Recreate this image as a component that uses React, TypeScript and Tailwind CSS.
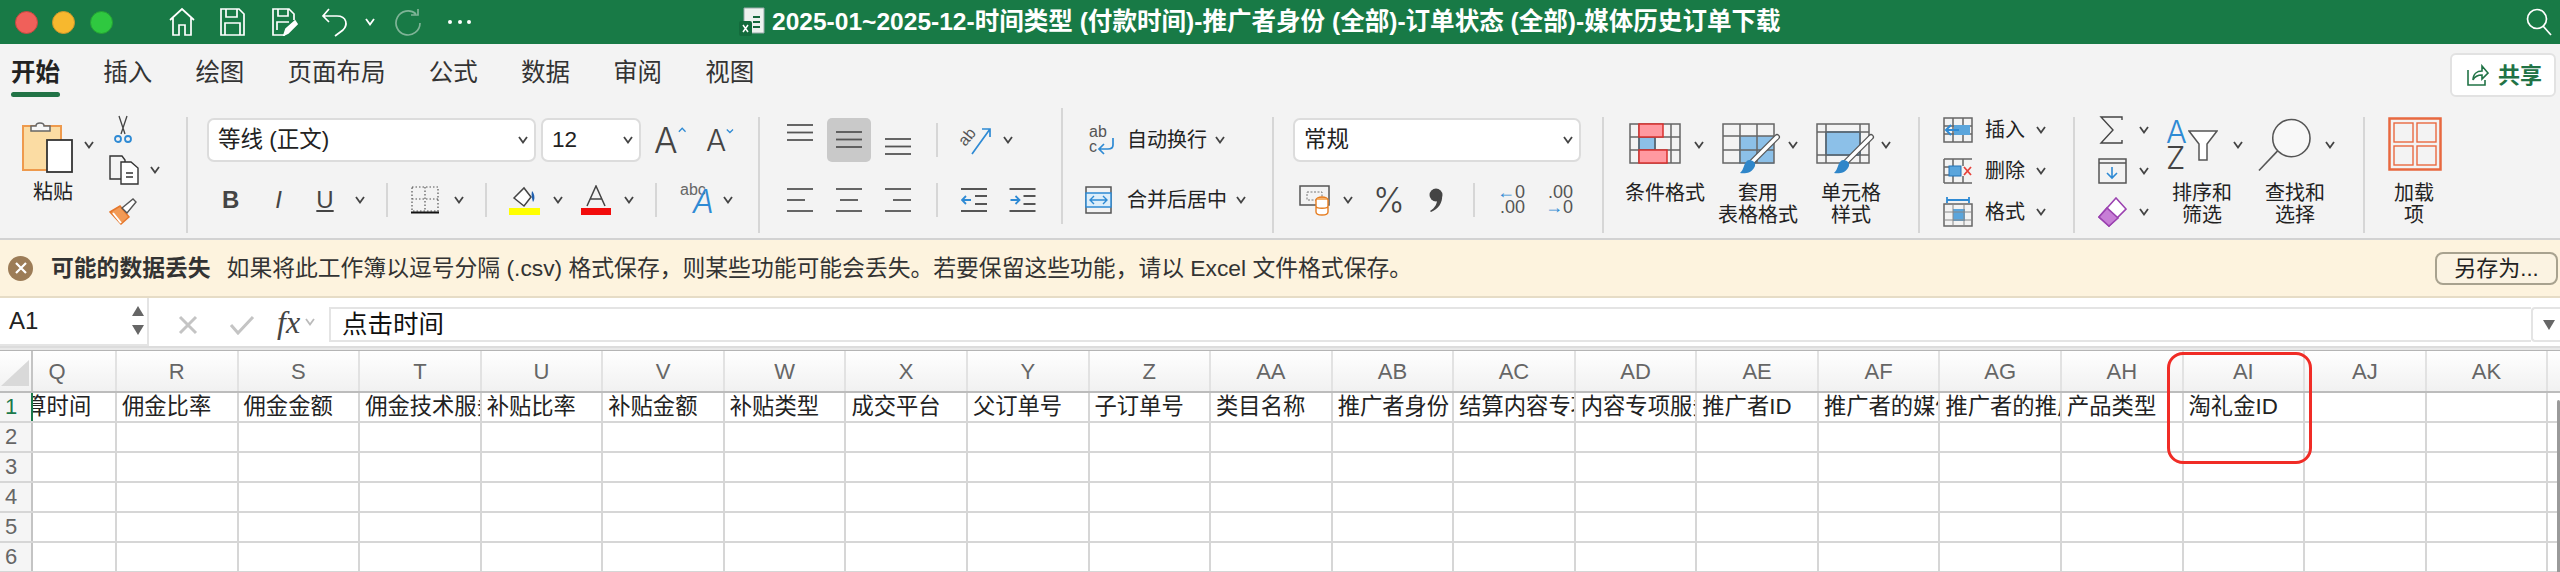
import React from 'react';

const ui = "font-['Liberation_Sans','Noto_Sans_CJK_SC',sans-serif]";
const thin = "font-['Inter',sans-serif] font-light";

const Chev = ({ className = '', color = '#444' }: { className?: string; color?: string }) => (
  <svg viewBox="0 0 10 8" className={`w-[10px] h-[8px] shrink-0 ${className}`} fill="none" stroke={color} strokeWidth="1.8">
    <path d="M1 1l4 5.5L9 1" />
  </svg>
);

const VSep = ({ className = '' }: { className?: string }) => (
  <div className={`w-[2px] shrink-0 bg-[#d6d6d6] ${className}`} />
);

const GroupSep = ({ className = '' }: { className?: string }) => <VSep className={`h-[116px] ${className}`} />;

// three line align icon, ys are line positions, widths as [x1,x2]
const Lines = ({ ys, xs, h = 24 }: { ys: number[]; xs: number[][]; h?: number }) => (
  <svg viewBox={`0 0 26 ${h}`} className="w-[26px] shrink-0" style={{ height: h }} stroke="#555" strokeWidth="1.8">
    {ys.map((y, i) => <line key={i} x1={xs[i][0]} x2={xs[i][1]} y1={y} y2={y} />)}
  </svg>
);

const full = [[0, 26], [0, 26], [0, 26]];

const Dropdown = ({ text, className }: { text: string; className: string }) => (
  <div className={`h-[44px] shrink-0 bg-white border-2 border-[#dcdcdc] rounded-[7px] flex items-center justify-between pl-[9px] pr-[6px] text-[22.5px] text-[#222] ${className}`}>
    <span className="whitespace-nowrap">{text}</span>
    <Chev />
  </div>
);

const Label = ({ lines }: { lines: string[] }) => (
  <div className="text-[20px] leading-[22px] text-[#222] text-center whitespace-nowrap">
    {lines.map(l => <div key={l}>{l}</div>)}
  </div>
);

const TallCol = ({ w, ml, children, lines }: { w: string; ml: string; children: React.ReactNode; lines: string[] }) => (
  <div className={`${w} ${ml} shrink-0 flex flex-col`}>
    <div className="h-[65px] flex items-start">{children}</div>
    <Label lines={lines} />
  </div>
);

const CellRow = ({ icon, text }: { icon: React.ReactNode; text: string }) => (
  <div className="h-[30px] flex items-center">
    <div className="w-[30px] ml-[23px] shrink-0">{icon}</div>
    <span className="w-[40px] ml-[12px] text-[20px] text-[#222] whitespace-nowrap">{text}</span>
    <Chev className="ml-[11px]" />
  </div>
);

const GridLines = ({ w, h, cols, rows, color = '#666' }: { w: number; h: number; cols: number[]; rows: number[]; color?: string }) => (
  <g stroke={color} strokeWidth="1.5" fill="none">
    <rect x="1" y="1" width={w - 2} height={h - 2} />
    {cols.map(c => <line key={c} x1={c} x2={c} y1="1" y2={h - 1} />)}
    {rows.map(r => <line key={r} y1={r} y2={r} x1="1" x2={w - 1} />)}
  </g>
);

const Brush = () => (
  <g>
    <path d="M55 14 L29 40" stroke="#555" strokeWidth="6" strokeLinecap="round" />
    <path d="M55 14 L29 40" stroke="#fff" strokeWidth="3.5" strokeLinecap="round" />
    <path d="M27 37c5 0 8 4 5 8-3 5-9 6-14 5 2-2 3-4 4-7 1-3 3-6 5-6z" fill="#2f86c9" />
  </g>
);

const headers = ['Q', 'R', 'S', 'T', 'U', 'V', 'W', 'X', 'Y', 'Z', 'AA', 'AB', 'AC', 'AD', 'AE', 'AF', 'AG', 'AH', 'AI', 'AJ', 'AK', ''];
const row1 = ['结算时间', '佣金比率', '佣金金额', '佣金技术服务费', '补贴比率', '补贴金额', '补贴类型', '成交平台', '父订单号', '子订单号', '类目名称', '推广者身份', '结算内容专项服务费', '内容专项服务费', '推广者ID', '推广者的媒体名称', '推广者的推广位', '产品类型', '淘礼金ID', '', '', ''];

const colW = (i: number) => (i === 0 ? 'w-[84px]' : 'w-[121.57px]');

const tabs = ['开始', '插入', '绘图', '页面布局', '公式', '数据', '审阅', '视图'];

export default function App() {
  return (
    <div className={`relative w-[2560px] h-[572px] overflow-hidden bg-white ${ui}`}>
      {/* title bar */}
      <div className="h-[44px] bg-[#187a46] flex items-center">
        <div className="w-[23px] h-[23px] ml-[15px] rounded-full bg-[#f0605a] border border-[#c8473f]" />
        <div className="w-[23px] h-[23px] ml-[14px] rounded-full bg-[#f7b82e] border border-[#d0962a]" />
        <div className="w-[23px] h-[23px] ml-[15px] rounded-full bg-[#2fc840] border border-[#25a233]" />
        <svg viewBox="0 0 28 30" className="w-[28px] h-[30px] ml-[55px]" fill="none" stroke="#fff" strokeWidth="1.7">
          <path d="M2 13 14 2l12 11M5 11v17h6V18h6v10h6V11" />
        </svg>
        <svg viewBox="0 0 28 28" className="w-[28px] h-[28px] ml-[22px]" fill="none" stroke="#fff" strokeWidth="1.7">
          <path d="M3 1h18l5 5v21H3zM8 1v8h11V1M7 27V15h15v12" />
        </svg>
        <svg viewBox="0 0 28 28" className="w-[28px] h-[28px] ml-[24px]" fill="none" stroke="#fff" strokeWidth="1.7">
          <path d="M15 27H3V1h16l5 5v6M8 1v7h10V1M7 22v-8h12" />
          <path d="M14 27l2-6 9-8 2 3-9 9z" fill="#fff" />
        </svg>
        <svg viewBox="0 0 30 30" className="w-[30px] h-[30px] ml-[23px]" fill="none" stroke="#fff" strokeWidth="1.7">
          <path d="M2 9h14c10 0 11 9 6 14l-8 6M8 2 2 9l6 6" />
        </svg>
        <Chev className="ml-[14px]" color="#fff" />
        <svg viewBox="0 0 28 28" className="w-[28px] h-[28px] ml-[19px]" fill="none" stroke="#7fb497" strokeWidth="1.7">
          <path d="M22 6A12 12 0 1 0 26 15M24 1v6h-7" />
        </svg>
        <div className="ml-[26px] w-[23px] flex justify-between">
          <div className="w-[4px] h-[4px] rounded-full bg-white" />
          <div className="w-[4px] h-[4px] rounded-full bg-white" />
          <div className="w-[4px] h-[4px] rounded-full bg-white" />
        </div>
        <svg viewBox="0 0 28 30" className="w-[28px] h-[30px] ml-[268px]">
          <path d="M5 1h20v25H5z" fill="#eef2ef" stroke="#9aa" />
          <path d="M14 10h7M14 15h7M14 20h7" stroke="#16683c" strokeWidth="2" />
          <rect x="0" y="14" width="13" height="15" rx="2" fill="#136b3c" />
          <path d="M4 18l5 7M9 18l-5 7" stroke="#fff" strokeWidth="1.5" />
        </svg>
        <span className="ml-[5px] text-[24.55px] font-bold text-white whitespace-nowrap">2025-01~2025-12-时间类型 (付款时间)-推广者身份 (全部)-订单状态 (全部)-媒体历史订单下载</span>
        <svg viewBox="0 0 26 28" className="w-[26px] h-[28px] ml-auto mr-[8px]" fill="none" stroke="#fff" strokeWidth="1.7">
          <circle cx="11" cy="11" r="9.5" />
          <path d="M17 18l8 9" />
        </svg>
      </div>

      {/* tabs */}
      <div className="h-[73px] bg-[#f3f3f3] flex items-start">
        <div className="flex pl-[11px] pt-[14px] gap-[43.2px]">
          {tabs.map((t, i) => (
            <div key={t} className="flex flex-col">
              <span className={`text-[24.5px] leading-[30px] whitespace-nowrap ${i === 0 ? 'font-bold text-[#222]' : 'text-[#333]'}`}>{t}</span>
              {i === 0 && <div className="h-[5px] mt-[4px] rounded-full bg-[#217346]" />}
            </div>
          ))}
        </div>
        <div className="ml-auto mr-[4px] mt-[9px] w-[106px] h-[44px] bg-white border-2 border-[#e2e2e2] rounded-[6px] flex items-center pl-[15px]">
          <svg viewBox="0 0 22 22" className="w-[22px] h-[22px]" fill="none" stroke="#217346" strokeWidth="1.6">
            <path d="M1 6v15h17v-5M6 16c0-6 4-9 9-9V2l6 7-6 6v-4c-4 0-7 1-9 5z" />
          </svg>
          <span className="ml-[9px] text-[22px] font-bold text-[#217346]">共享</span>
        </div>
      </div>

      {/* ribbon */}
      <div className="h-[123px] bg-[#f3f3f3] border-b-2 border-[#d2d2d2] flex items-start">
        {/* clipboard */}
        <div className="w-[186px] shrink-0 flex items-start">
          <div className="w-[62px] ml-[22px] mt-[1px] shrink-0 flex flex-col">
            <svg viewBox="0 0 51 55" className="w-[51px] h-[55px]">
              <rect x="1" y="8" width="38" height="44" fill="#fbdca3" stroke="#ee9a4d" strokeWidth="2" />
              <path d="M9 13V8h5c0-4 8-4 8 0h6v5z" fill="#f6f6f6" stroke="#666" strokeWidth="1.5" />
              <rect x="25" y="22" width="25" height="32" fill="#fff" stroke="#333" strokeWidth="1.8" />
            </svg>
            <div className="mt-[8px] text-center"><Label lines={['粘贴']} /></div>
          </div>
          <Chev className="mt-[24px]" />
          <div className="ml-[15px] -mt-[2px] flex flex-col">
            <svg viewBox="0 0 20 28" className="w-[20px] h-[28px] ml-[4px]" fill="none">
              <path d="M6 1l6 18M14 1 8 19" stroke="#444" strokeWidth="1.3" />
              <circle cx="5" cy="24" r="3" stroke="#2e8ad4" strokeWidth="1.8" />
              <circle cx="15" cy="24" r="3" stroke="#2e8ad4" strokeWidth="1.8" />
            </svg>
            <div className="flex items-center mt-[12px]">
              <svg viewBox="0 0 30 30" className="w-[30px] h-[30px]" fill="#fff" stroke="#333" strokeWidth="1.4">
                <path d="M1 1h12l3 4v19H1z" fill="none" />
                <path d="M12 7h10l7 6v16H12z" />
                <path d="M17 18h7M17 22h7" />
              </svg>
              <Chev className="ml-[11px]" />
            </div>
            <svg viewBox="0 0 28 28" className="w-[28px] h-[28px] mt-[12px]">
              <path d="M1 15l10-6 9 11-8 7z" fill="#f29a55" stroke="#e5762a" strokeWidth="1.5" />
              <path d="M4 16l8 10" stroke="#fff" strokeWidth="2" />
              <path d="M13 11 24 2l3 3-9 11z" fill="#fff" stroke="#555" strokeWidth="1.4" />
            </svg>
          </div>
        </div>
        <GroupSep />

        {/* font */}
        <div className="w-[570px] shrink-0 pl-[19px] pt-[1px]">
          <div className="flex items-center h-[44px]">
            <Dropdown text="等线 (正文)" className="w-[329px]" />
            <Dropdown text="12" className="w-[100px] ml-[5px]" />
            <div className="ml-[13px] w-[32px] flex items-start">
              <span className={`text-[35px] leading-[36px] text-[#444] ${thin}`}>A</span>
              <svg viewBox="0 0 10 6" className="w-[9px] h-[6px] mt-[5px]" fill="none" stroke="#2e8ad4" strokeWidth="1.6"><path d="M1 5l4-4 4 4" /></svg>
            </div>
            <div className="ml-[20px] w-[28px] flex items-start">
              <span className={`text-[30px] leading-[34px] text-[#444] ${thin}`}>A</span>
              <svg viewBox="0 0 10 6" className="w-[9px] h-[6px] mt-[5px]" fill="none" stroke="#2e8ad4" strokeWidth="1.6"><path d="M1 1l4 4 4-4" /></svg>
            </div>
          </div>
          <div className="flex items-center h-[34px] mt-[21px]">
            <span className="ml-[15px] w-[16px] text-center text-[24px] font-bold text-[#444]">B</span>
            <span className="ml-[33px] w-[15px] text-center text-[24px] italic text-[#444]">I</span>
            <span className="ml-[30px] w-[18px] text-center text-[24px] underline text-[#444]">U</span>
            <Chev className="ml-[21px]" />
            <VSep className="h-[34px] ml-[21px]" />
            <svg viewBox="0 0 28 28" className="w-[28px] h-[28px] ml-[23px]" fill="none">
              <path d="M1 1h26v24H1zM14 1v24M1 13h26" stroke="#555" strokeWidth="1.2" strokeDasharray="1.5 2" />
              <path d="M0 26.5h28" stroke="#111" strokeWidth="2" />
            </svg>
            <Chev className="ml-[15px]" />
            <VSep className="h-[34px] ml-[21px]" />
            <svg viewBox="0 0 31 30" className="w-[31px] h-[30px] ml-[22px]">
              <path d="M5 13 15 3l7 9-7 9z" fill="#fff" stroke="#444" strokeWidth="1.5" />
              <path d="M23 6c3 3 3 9 1 11-1-3-2-7-1-11z" fill="#1f5fae" />
              <rect x="0" y="23" width="31" height="7" fill="#ffff00" />
            </svg>
            <Chev className="ml-[13px]" />
            <svg viewBox="0 0 30 30" className="w-[30px] h-[30px] ml-[18px]" fill="none">
              <path d="M6 21 15 1l9 20M9 14h12" stroke="#444" strokeWidth="1.5" />
              <rect x="0" y="23" width="30" height="7" fill="#f20c0c" />
            </svg>
            <Chev className="ml-[13px]" />
            <VSep className="h-[34px] ml-[21px]" />
            <div className="ml-[23px] w-[34px] h-[34px] relative">
              <span className="absolute left-0 -top-[2px] text-[16px] leading-[18px] text-[#666]">abc</span>
              <span className={`absolute right-0 top-[2px] text-[32px] leading-[34px] italic text-[#2e8ad4] ${thin}`}>A</span>
            </div>
            <Chev className="ml-[9px]" />
          </div>
        </div>
        <GroupSep />

        {/* alignment */}
        <div className="w-[301px] shrink-0 pl-[18px] pt-[1px]">
          <div className="flex items-center h-[44px]">
            <div className="w-[44px] h-[44px] flex items-center justify-center"><div className="-mt-[14px]"><Lines ys={[1, 8.5, 16]} xs={full} h={18} /></div></div>
            <div className="w-[44px] h-[44px] ml-[5px] bg-[#c9c9c9] rounded-[5px] flex items-center justify-center"><Lines ys={[1, 8.5, 16]} xs={full} h={18} /></div>
            <div className="w-[44px] h-[44px] ml-[5px] flex items-center justify-center"><div className="mt-[14px]"><Lines ys={[1, 8.5, 16]} xs={full} h={18} /></div></div>
            <VSep className="h-[34px] ml-[16px]" />
            <svg viewBox="0 0 31 30" className="w-[31px] h-[30px] ml-[22px] overflow-visible" fill="none">
              <path d="M12 29 30 4M22 4h8v8" stroke="#2e8ad4" strokeWidth="1.7" />
              <text x="0" y="17" fontSize="16" fill="#555" transform="rotate(-50 8 14)">ab</text>
            </svg>
            <Chev className="ml-[12px]" />
          </div>
          <div className="flex items-center h-[34px] mt-[21px]">
            <div className="w-[44px] flex justify-center"><Lines ys={[2, 13, 24]} xs={[[0, 26], [0, 18], [0, 26]]} h={26} /></div>
            <div className="w-[44px] ml-[5px] flex justify-center"><Lines ys={[2, 13, 24]} xs={[[0, 26], [4, 22], [0, 26]]} h={26} /></div>
            <div className="w-[44px] ml-[5px] flex justify-center"><Lines ys={[2, 13, 24]} xs={[[0, 26], [8, 26], [0, 26]]} h={26} /></div>
            <VSep className="h-[34px] ml-[16px]" />
            <svg viewBox="0 0 26 26" className="w-[26px] h-[26px] ml-[23px]" fill="none">
              <path d="M0 2h26M14 9h12M14 17h12M0 24h26" stroke="#555" strokeWidth="1.8" />
              <path d="M10 13H1M5 9l-4 4 4 4" stroke="#2e8ad4" strokeWidth="1.8" />
            </svg>
            <svg viewBox="0 0 26 26" className="w-[27px] h-[26px] ml-[22px]" fill="none">
              <path d="M0 2h26M14 9h12M14 17h12M0 24h26" stroke="#555" strokeWidth="1.8" />
              <path d="M1 13h9M6 9l4 4-4 4" stroke="#2e8ad4" strokeWidth="1.8" />
            </svg>
          </div>
        </div>
        <GroupSep className="-mt-[9px]" />

        {/* wrap / merge */}
        <div className="w-[209px] shrink-0 pt-[1px]">
          <div className="flex items-center h-[44px]">
            <svg viewBox="0 0 26 30" className="w-[26px] h-[30px] ml-[26px] overflow-visible" fill="none">
              <text x="0" y="12" fontSize="16" fill="#555">ab</text>
              <text x="0" y="27" fontSize="16" fill="#555">c</text>
              <path d="M24 13v7c0 3-2 4-5 4h-8M15 19l-5 5 5 5" stroke="#2e8ad4" strokeWidth="1.7" />
            </svg>
            <span className="ml-[12px] text-[20px] text-[#222] whitespace-nowrap">自动换行</span>
            <Chev className="ml-[8px]" />
          </div>
          <div className="flex items-center h-[34px] mt-[21px]">
            <svg viewBox="0 0 27 28" className="w-[27px] h-[28px] ml-[22px]" fill="none">
              <rect x="1" y="1" width="25" height="26" stroke="#555" strokeWidth="1.5" />
              <rect x="1" y="7" width="25" height="14" fill="#dceefa" stroke="#2e8ad4" strokeWidth="1.5" />
              <path d="M5 14h17M9 10l-4 4 4 4M18 10l4 4-4 4" stroke="#2e8ad4" strokeWidth="1.4" />
            </svg>
            <span className="ml-[15px] text-[20px] text-[#222] whitespace-nowrap">合并后居中</span>
            <Chev className="ml-[9px]" />
          </div>
        </div>
        <GroupSep />

        {/* number */}
        <div className="w-[328px] shrink-0 pl-[19px] pt-[1px]">
          <Dropdown text="常规" className="w-[288px]" />
          <div className="flex items-center h-[34px] mt-[21px]">
            <svg viewBox="0 0 33 32" className="w-[33px] h-[32px] ml-[6px]" fill="none">
              <rect x="1" y="2" width="29" height="19" stroke="#555" strokeWidth="1.5" />
              <path d="M8 8h15v8H8z" stroke="#777" strokeDasharray="2 1.5" />
              <ellipse cx="23" cy="16" rx="6" ry="3" fill="#f6b26b" stroke="#e67e22" strokeWidth="1.4" />
              <path d="M17 16v12c0 4 12 4 12 0V16M17 22c0 3 12 3 12 0" fill="#fff" stroke="#e67e22" strokeWidth="1.4" />
            </svg>
            <Chev className="ml-[11px]" />
            <span className={`ml-[20px] w-[27px] text-[34px] leading-[34px] text-[#444] ${thin}`}>%</span>
            <svg viewBox="0 0 15 24" className="w-[15px] h-[24px] ml-[28px]" fill="#444">
              <circle cx="8" cy="7" r="6.5" />
              <path d="M14 7c1 8-4 14-11 17l-1-1c5-3 8-8 7-14z" />
            </svg>
            <VSep className="h-[34px] ml-[30px]" />
            <div className="ml-[21px] w-[29px] h-[30px] text-[18px] leading-[15px] text-[#555] text-right whitespace-nowrap">
              <div><span className="text-[#2e8ad4]">←</span>0</div>
              <div>.00</div>
            </div>
            <div className="ml-[20px] w-[28px] h-[30px] text-[18px] leading-[15px] text-[#555] text-right whitespace-nowrap">
              <div>.00</div>
              <div><span className="text-[#2e8ad4]">→</span>0</div>
            </div>
          </div>
        </div>
        <GroupSep />

        {/* styles */}
        <div className="w-[314px] shrink-0 flex items-start">
          <TallCol w="w-[84px]" ml="ml-[19px]" lines={['条件格式']}>
            <svg viewBox="0 0 52 41" className="w-[52px] h-[41px] ml-[6px] mt-[6px]">
              <rect x="10" y="14" width="16" height="13" fill="#8cc0e8" stroke="#2273b5" strokeWidth="1.5" />
              <GridLines w={52} h={41} cols={[10, 26, 42]} rows={[14, 27]} />
              <rect x="10" y="1" width="24" height="13" fill="#ff99a0" stroke="#d9302e" strokeWidth="1.5" />
              <rect x="10" y="27" width="28" height="13" fill="#ff99a0" stroke="#d9302e" strokeWidth="1.5" />
            </svg>
            <Chev className="ml-[13px] mt-[24px]" />
          </TallCol>
          <TallCol w="w-[80px]" ml="ml-[11px]" lines={['套用', '表格格式']}>
            <svg viewBox="0 0 53 52" className="w-[53px] h-[52px] ml-[4px] mt-[6px] overflow-visible">
              <rect x="17" y="13" width="35" height="28" fill="#8cc0e8" />
              <GridLines w={53} h={41} cols={[18, 35]} rows={[13, 27]} />
              <Brush />
            </svg>
            <Chev className="ml-[13px] mt-[24px]" />
          </TallCol>
          <TallCol w="w-[80px]" ml="ml-[13px]" lines={['单元格', '样式']}>
            <svg viewBox="0 0 54 52" className="w-[54px] h-[52px] ml-[5px] mt-[6px] overflow-visible">
              <rect x="10" y="9" width="34" height="23" fill="#8cc0e8" stroke="#2273b5" strokeWidth="1.5" />
              <GridLines w={54} h={41} cols={[10, 44]} rows={[9, 32]} />
              <Brush />
            </svg>
            <Chev className="ml-[11px] mt-[24px]" />
          </TallCol>
        </div>
        <GroupSep />

        {/* cells */}
        <div className="w-[153px] shrink-0 -mt-[2px] flex flex-col gap-[11px]">
          <CellRow text="插入" icon={
            <svg viewBox="0 0 30 26" className="w-[30px] h-[26px]">
              <GridLines w={30} h={26} cols={[10, 20]} rows={[9, 17]} />
              <rect x="11" y="8" width="16" height="10" fill="#5aa5dc" />
              <path d="M16 13H3M8 8l-5 5 5 5" fill="none" stroke="#2e8ad4" strokeWidth="2" />
            </svg>
          } />
          <CellRow text="删除" icon={
            <svg viewBox="0 0 30 26" className="w-[30px] h-[26px]">
              <path d="M1 1h28M1 25h28M1 9h10M1 17h10M10 1v7M20 1v7M10 18v7M20 18v7M1 1v24" fill="none" stroke="#666" strokeWidth="1.5" />
              <rect x="6" y="8" width="12" height="10" fill="#5aa5dc" stroke="#2273b5" />
              <path d="M21 9l7 8M28 9l-7 8" stroke="#e8413a" strokeWidth="1.8" />
            </svg>
          } />
          <CellRow text="格式" icon={
            <svg viewBox="0 0 30 30" className="w-[30px] h-[30px]">
              <path d="M4 3h22M4 0v6M26 0v6" fill="none" stroke="#2e8ad4" strokeWidth="1.8" />
              <rect x="10" y="12" width="12" height="12" fill="#5aa5dc" />
              <rect x="1" y="7" width="28" height="22" fill="none" stroke="#666" strokeWidth="1.5" />
              <path d="M10 7v22M21 7v22M1 15h28M1 23h28" stroke="#888" strokeWidth="1" />
            </svg>
          } />
        </div>
        <GroupSep />

        {/* editing */}
        <div className="w-[288px] shrink-0 flex items-start">
          <div className="ml-[23px] -mt-[2px] flex flex-col gap-[11px]">
            <div className="h-[30px] flex items-center">
              <svg viewBox="0 0 29 28" className="w-[29px] h-[28px]" fill="none" stroke="#444" strokeWidth="1.4">
                <path d="M24 4V1H3l12 13L3 27h21v-3" />
              </svg>
              <Chev className="ml-[12px]" />
            </div>
            <div className="h-[30px] flex items-center">
              <svg viewBox="0 0 29 26" className="w-[29px] h-[26px]" fill="none">
                <rect x="1" y="1" width="27" height="24" stroke="#555" strokeWidth="1.5" />
                <path d="M1 5h27" stroke="#555" strokeWidth="1.5" />
                <path d="M14 9v11M9 15l5 5 5-5" stroke="#2e8ad4" strokeWidth="1.6" />
              </svg>
              <Chev className="ml-[12px]" />
            </div>
            <div className="h-[30px] flex items-center">
              <svg viewBox="0 0 29 30" className="w-[29px] h-[30px]">
                <path d="M1 20 18 1l10 11-17 17z" fill="#fff" stroke="#9b42b0" strokeWidth="1.6" />
                <path d="M1 20 9 11l11 10-9 8z" fill="#c77ed6" stroke="#9b42b0" strokeWidth="1.6" />
              </svg>
              <Chev className="ml-[12px]" />
            </div>
          </div>
          <TallCol w="w-[80px]" ml="ml-[13px]" lines={['排序和', '筛选']}>
            <div className="ml-[4px] mt-[2px] w-[52px] h-[49px] flex">
              <div className="flex flex-col w-[22px]">
                <span className={`text-[31px] leading-[26px] text-[#2e8ad4] ${thin}`}>A</span>
                <span className={`text-[31px] leading-[26px] text-[#444] ${thin}`}>Z</span>
              </div>
              <svg viewBox="0 0 30 32" className="w-[30px] h-[32px] mt-[11px]" fill="#fff" stroke="#555" strokeWidth="1.5">
                <path d="M1 1h28L19 14v16h-8V14z" />
              </svg>
            </div>
            <Chev className="ml-[15px] mt-[24px]" />
          </TallCol>
          <TallCol w="w-[80px]" ml="ml-[13px]" lines={['查找和', '选择']}>
            <svg viewBox="0 0 54 54" className="w-[54px] h-[54px] ml-[3px] mt-[1px]" fill="#f8f8f8" stroke="#555" strokeWidth="1.6">
              <circle cx="34" cy="20" r="19" />
              <path d="M20 33 1 53" />
            </svg>
            <Chev className="ml-[14px] mt-[24px]" />
          </TallCol>
        </div>
        <GroupSep />

        {/* add-ins */}
        <TallCol w="w-[60px]" ml="ml-[19px]" lines={['加载', '项']}>
          <svg viewBox="0 0 54 54" className="w-[54px] h-[54px] ml-[4px]" fill="none" stroke="#e8683f">
            <rect x="1.5" y="1.5" width="51" height="51" strokeWidth="2.5" />
            <rect x="6" y="6" width="19" height="19" strokeWidth="1.4" />
            <rect x="29" y="6" width="19" height="19" strokeWidth="1.4" />
            <rect x="6" y="29" width="19" height="19" strokeWidth="1.4" />
            <rect x="29" y="29" width="19" height="19" strokeWidth="1.4" />
          </svg>
        </TallCol>
      </div>

      {/* warning banner */}
      <div className="h-[58px] bg-[#fdf3de] border-b-2 border-[#e6dcc6] flex items-center">
        <div className="w-[25px] h-[25px] ml-[8px] rounded-full bg-[#9c7c57] flex items-center justify-center">
          <svg viewBox="0 0 12 12" className="w-[12px] h-[12px]" stroke="#fff" strokeWidth="2.2"><path d="M1 1l10 10M11 1 1 11" /></svg>
        </div>
        <span className="ml-[18px] text-[22.8px] font-bold text-[#333] whitespace-nowrap">可能的数据丢失</span>
        <span className="ml-[16px] text-[22.8px] text-[#333] whitespace-nowrap">如果将此工作簿以逗号分隔 (.csv) 格式保存，则某些功能可能会丢失。若要保留这些功能，请以 Excel 文件格式保存。</span>
        <div className="ml-auto mr-[2px] w-[123px] h-[33px] border-2 border-[#a8a28f] rounded-[8px] bg-[#fbf3e2] flex items-center justify-center text-[22px] text-[#222]">另存为...</div>
      </div>

      {/* formula bar */}
      <div className="h-[50px] bg-white flex border-b-2 border-[#dcdcdc]">
        <div className="w-[149px] h-[48px] bg-white border-b-2 border-r-2 border-[#e4e4e4] flex items-center pl-[9px] relative">
          <span className="text-[24px] text-[#222]">A1</span>
          <div className="absolute right-[3px] top-[8px] flex flex-col gap-[9px] items-center">
            <div className="w-0 h-0 border-x-[6px] border-x-transparent border-b-[10px] border-b-[#666]" />
            <div className="w-0 h-0 border-x-[6px] border-x-transparent border-t-[10px] border-t-[#666]" />
          </div>
        </div>
        <div className="w-[180px] flex items-center">
          <svg viewBox="0 0 20 20" className="w-[20px] h-[20px] ml-[29px] mt-[6px]" stroke="#c4c4c4" strokeWidth="3"><path d="M2 2l16 16M18 2 2 18" /></svg>
          <svg viewBox="0 0 26 20" className="w-[26px] h-[20px] ml-[31px] mt-[6px]" fill="none" stroke="#c4c4c4" strokeWidth="3"><path d="M2 10l7 8L24 2" /></svg>
          <span className="ml-[22px] text-[32px] italic text-[#444] font-['Liberation_Serif',serif] whitespace-nowrap">fx</span>
          <Chev className="ml-[5px]" color="#bbb" />
        </div>
        <div className="flex-1 h-[35px] mt-[9px] border-y-2 border-l-2 border-[#e4e4e4] flex items-center pl-[11px] text-[25.5px] text-[#111]">点击时间</div>
        <div className="w-[29px] h-[35px] mt-[9px] border-2 border-r-0 border-[#e4e4e4] rounded-l-[4px] flex items-center pl-[10px]">
          <div className="w-0 h-0 border-x-[6px] border-x-transparent border-t-[10px] border-t-[#666]" />
        </div>
      </div>

      {/* sheet */}
      <div className="h-[3px] bg-[#e8e8e8] border-b border-[#b5b5b5]" />
      <div className="h-[42px] flex border-b-2 border-[#bcbcbc] bg-gradient-to-b from-white to-[#f1f1f1]">
        <div className="w-[33px] shrink-0 border-r-2 border-[#c4c4c4] pt-[9px] pl-[1px]">
          <div className="w-0 h-0 border-l-[28px] border-l-transparent border-b-[26px] border-b-[#d9d9d9]" />
        </div>
        {headers.map((h, i) => (
          <div key={i} className={`${colW(i)} shrink-0 border-r-2 border-[#e2e2e2] flex items-center justify-center text-[22px] text-[#666] ${i === 0 ? 'pr-[34px]' : ''}`}>{h}</div>
        ))}
      </div>
      {[1, 2, 3, 4, 5, 6].map(n => (
        <div key={n} className="h-[30px] flex border-b-2 border-[#d6d6d6]">
          <div className={`w-[33px] shrink-0 flex items-center pl-[5px] text-[22px] leading-none bg-[#f5f5f5] border-r-2 ${n === 1 ? 'border-[#1b7a4b] text-[#1b7a4b]' : 'border-[#c4c4c4] text-[#666]'}`}>{n}</div>
          {headers.map((_, i) => (
            <div key={i} className={`${colW(i)} shrink-0 overflow-hidden border-r-2 border-[#d6d6d6] flex items-center text-[22.3px] leading-none text-[#222] whitespace-nowrap ${i === 0 ? '' : 'pl-[5px]'}`}>
              {n === 1 && <span className={i === 0 ? '-ml-[31px]' : ''}>{row1[i]}</span>}
            </div>
          ))}
        </div>
      ))}

      {/* hand drawn red box and scrollbar sit over the sheet */}
      <div className="absolute left-[2167px] top-[352px] w-[145px] h-[112px] border-[3px] border-[#f02c26] rounded-[16px]" />
      <div className="absolute right-0 top-[400px] bottom-0 w-[3px] bg-[#9a9a9a] rounded-t-full" />
    </div>
  );
}
